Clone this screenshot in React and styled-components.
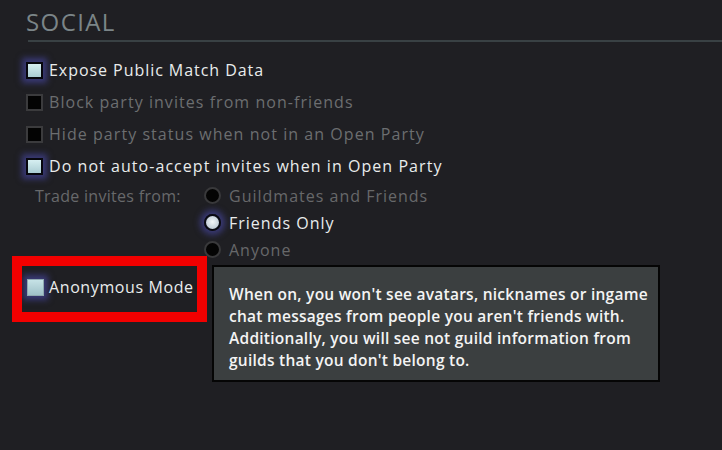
import React from 'react';
import styled, { createGlobalStyle, css } from 'styled-components';

//CSS STYLES
const GlobalStyle = createGlobalStyle`
  html, body {
    margin: 0;
    padding: 0;
    background: #1f1f23;
  }
  body {
    font-family: 'Open Sans', 'Noto Sans', sans-serif;
  }
`;

const Page = styled.div`
  width: 722px;
  height: 450px;
  overflow: hidden;
  background: #1f1f23;
  padding-left: 26px;
  box-sizing: border-box;
`;

const Header = styled.div`
  height: 42px;
  display: flex;
  align-items: flex-end;
  margin-left: 2px;
  border-bottom: 2px solid #394144;
  font-size: 24px;
  letter-spacing: 1.4px;
  color: #7b8588;
  line-height: 1;
  padding-bottom: 6px;
  box-sizing: border-box;
  text-indent: -2px;
`;

const List = styled.div`
  margin-top: 12px;
  display: flex;
  flex-direction: column;
`;

const Row = styled.div`
  height: 32px;
  display: flex;
  align-items: center;
  gap: 6px;
  font-size: 16px;
  letter-spacing: ${(p) => p.spacing || '1.05px'};
  color: ${(p) => (p.active ? '#e9ecec' : '#6c6e70')};
  position: relative;
`;

const glow = css`
  box-shadow: 0 0 6px 4px rgba(78, 78, 185, 0.55);
`;

const Box = styled.span`
  width: 17px;
  height: 17px;
  box-sizing: border-box;
  flex: none;
  ${(p) =>
    p.checked
      ? css`
          border: 2px solid #07070d;
          background: linear-gradient(#d6eff1, #aacdd3);
          ${glow};
        `
      : css`
          border: 2px solid #3b3b3d;
          background: #030303;
        `}
  ${(p) =>
    p.soft &&
    css`
      border: 1px solid #8fa9b0;
      background: linear-gradient(#c6e2e6, #9fc1c8);
    `}
`;

const TradeGroup = styled.div`
  display: grid;
  grid-template-columns: 169px auto;
  padding-left: 9px;
`;

const TradeLabel = styled.div`
  height: 27px;
  display: flex;
  align-items: center;
  font-size: 16px;
  letter-spacing: 0.3px;
  color: #68696b;
`;

const Radios = styled.div`
  display: flex;
  flex-direction: column;
`;

const RadioRow = styled.div`
  height: 27px;
  display: flex;
  align-items: center;
  gap: 8px;
  font-size: 16px;
  letter-spacing: 1px;
  color: ${(p) => (p.active ? '#e9ecec' : '#67686a')};
`;

const Dot = styled.span`
  width: 17px;
  height: 17px;
  border-radius: 50%;
  box-sizing: border-box;
  flex: none;
  ${(p) =>
    p.checked
      ? css`
          border: 2px solid #0a0a14;
          background: radial-gradient(circle at 50% 45%, #f2f6f8, #aebdcb);
          ${glow};
        `
      : css`
          border: 2px solid #39393b;
          background: #040404;
        `}
`;

const AnonRow = styled(Row)`
  margin-top: 8px;
  padding-left: 1px;
  gap: 5px;
`;

const Highlight = styled.div`
  position: absolute;
  left: -14px;
  top: -15px;
  width: 195px;
  height: 66px;
  box-sizing: border-box;
  border: 10px solid #f20000;
  pointer-events: none;
`;

const Tooltip = styled.div`
  position: absolute;
  left: 186px;
  top: -6px;
  width: 448px;
  box-sizing: border-box;
  background: #3b3f40;
  border: 2px solid #050505;
  padding: 16px 10px 9px 15px;
  font-size: 15.5px;
  font-weight: 600;
  line-height: 22px;
  letter-spacing: 0.25px;
  color: #f4f4f4;
`;

const checks = [
  { label: 'Expose Public Match Data', checked: true, spacing: '0.95px' },
  { label: 'Block party invites from non-friends', checked: false },
  { label: 'Hide party status when not in an Open Party', checked: false },
  { label: 'Do not auto-accept invites when in Open Party', checked: true },
];

const trade = [
  { label: 'Guildmates and Friends', checked: false },
  { label: 'Friends Only', checked: true },
  { label: 'Anyone', checked: false },
];

export default function App() {
  return (
    <Page>
      <GlobalStyle />
      <Header>SOCIAL</Header>
      <List>
        {checks.map((c) => (
          <Row key={c.label} active={c.checked} spacing={c.spacing}>
            <Box checked={c.checked} />
            {c.label}
          </Row>
        ))}
        <TradeGroup>
          <TradeLabel>Trade invites from:</TradeLabel>
          <Radios>
            {trade.map((t) => (
              <RadioRow key={t.label} active={t.checked}>
                <Dot checked={t.checked} />
                {t.label}
              </RadioRow>
            ))}
          </Radios>
        </TradeGroup>
        <AnonRow active spacing="0.6px">
          <Box checked soft />
          Anonymous Mode
          <Highlight />
          <Tooltip>
            When on, you won't see avatars, nicknames or ingame chat messages
            from people you aren't friends with. Additionally, you will see not
            guild information from guilds that you don't belong to.
          </Tooltip>
        </AnonRow>
      </List>
    </Page>
  );
}
